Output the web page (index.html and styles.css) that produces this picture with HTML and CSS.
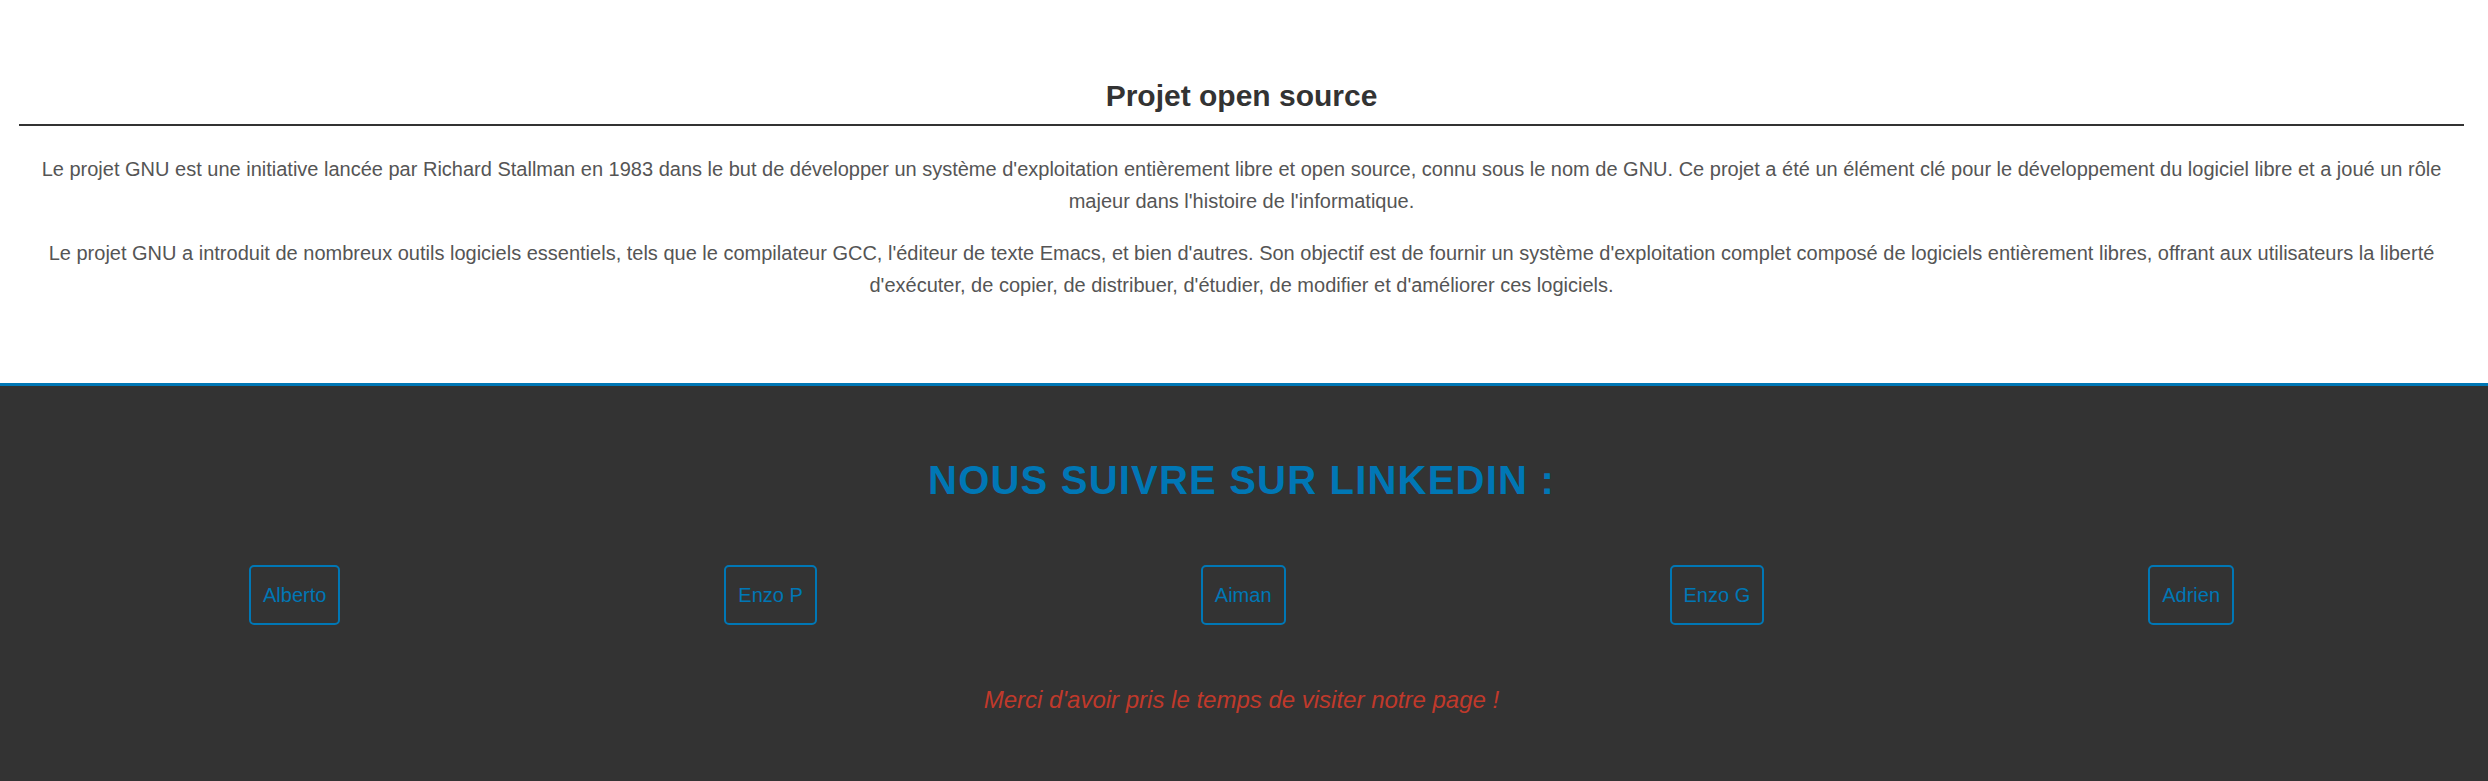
FILE: index.html
```html
<!DOCTYPE html>
<html lang="fr">
<head>
<meta charset="utf-8">
<title>Projet open source</title>
<link rel="stylesheet" href="styles.css">
</head>
<body>
<main class="page">
  <section class="intro">
    <h2 class="intro-title">Projet open source</h2>
    <p class="intro-text">Le projet GNU est une initiative lancée par Richard Stallman en 1983 dans le but de développer un système d'exploitation entièrement libre et open source, connu sous le nom de GNU. Ce projet a été un élément clé pour le développement du logiciel libre et a joué un rôle majeur dans l'histoire de l'informatique.</p>
    <p class="intro-text">Le projet GNU a introduit de nombreux outils logiciels essentiels, tels que le compilateur GCC, l'éditeur de texte Emacs, et bien d'autres. Son objectif est de fournir un système d'exploitation complet composé de logiciels entièrement libres, offrant aux utilisateurs la liberté d'exécuter, de copier, de distribuer, d'étudier, de modifier et d'améliorer ces logiciels.</p>
  </section>
  <footer class="footer">
    <h3 class="footer-title">NOUS SUIVRE SUR LINKEDIN :</h3>
    <ul class="team">
      <li class="team-item"><a class="team-link" href="#">Alberto</a></li>
      <li class="team-item"><a class="team-link" href="#">Enzo P</a></li>
      <li class="team-item"><a class="team-link" href="#">Aiman</a></li>
      <li class="team-item"><a class="team-link" href="#">Enzo G</a></li>
      <li class="team-item"><a class="team-link" href="#">Adrien</a></li>
    </ul>
    <p class="footer-thanks">Merci d'avoir pris le temps de visiter notre page !</p>
  </footer>
</main>
</body>
</html>
```
FILE: styles.css
```css
html, body {
  margin: 0;
  padding: 0;
  background: #ffffff;
}

body {
  font-family: "Liberation Sans", Arial, sans-serif;
}

.intro {
  padding: 79px 24px 62px 19px;
}

.intro-title {
  margin: 0 0 27px;
  padding-bottom: 11px;
  border-bottom: 2px solid #333333;
  text-align: center;
  font-size: 30px;
  line-height: 34px;
  font-weight: bold;
  color: #333333;
}

.intro-text {
  margin: 20px 0;
  text-align: center;
  font-size: 20px;
  line-height: 32px;
  color: #555555;
}

.footer {
  border-top: 3px solid #0077b5;
  background: #333333;
  padding: 71px 62px 67px 57px;
  text-align: center;
}

.footer-title {
  margin: 0;
  font-size: 40px;
  line-height: 46px;
  font-weight: bold;
  letter-spacing: 1.2px;
  color: #0077b5;
}

.team {
  display: flex;
  justify-content: space-around;
  list-style: none;
  margin: 62px 0 61px;
  padding: 0;
}

.team-link {
  display: block;
  padding: 16px 12px;
  line-height: 24px;
  font-size: 20px;
  border: 2px solid #0077b5;
  border-radius: 5px;
  color: #0077b5;
  text-decoration: none;
}

.footer-thanks {
  margin: 0;
  font-size: 24px;
  line-height: 28px;
  font-style: italic;
  color: #c0392b;
}
```
